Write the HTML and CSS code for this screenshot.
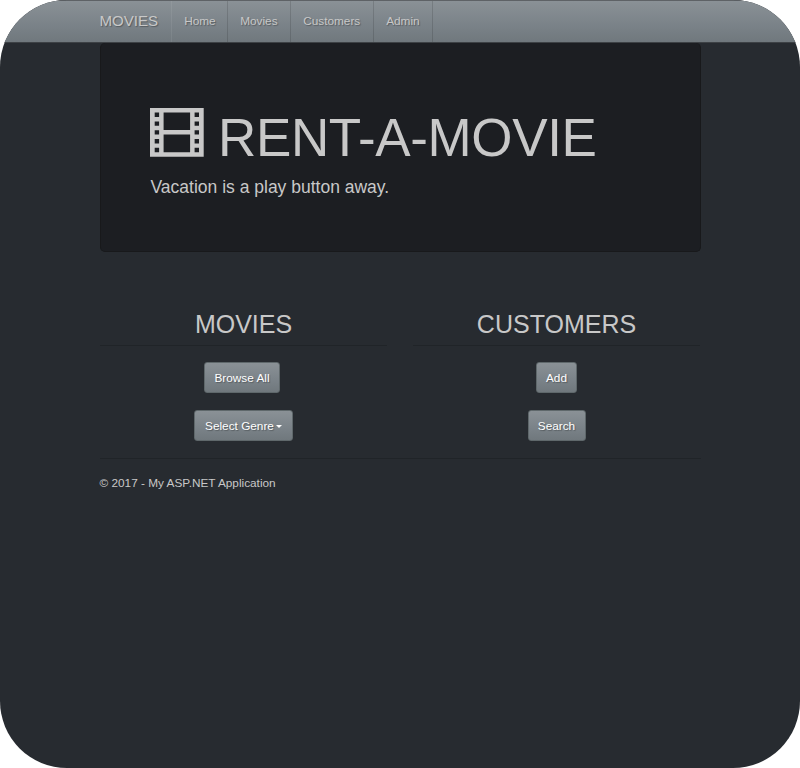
FILE: index.html
```html
<!DOCTYPE html>
<html lang="en">
<head>
<meta charset="utf-8">
<title>Rent-a-Movie</title>
<link rel="stylesheet" href="styles.css">
</head>
<body>
<div class="page">
  <nav class="navbar">
    <a class="brand">MOVIES</a>
    <ul class="nav">
      <li class="w-home">Home</li>
      <li class="w-movies">Movies</li>
      <li class="w-customers">Customers</li>
      <li class="w-admin">Admin</li>
    </ul>
  </nav>
  <main class="container">
    <header class="jumbotron">
      <h1><svg class="film" viewBox="0 0 54 49" aria-hidden="true"><path fill="currentColor" fill-rule="evenodd" d="M0 0H53.7V48.7H0ZM4.7 4.5V8.9H9.1V4.5ZM4.7 13.4V17.8H9.1V13.4ZM4.7 22.2V26.6H9.1V22.2ZM4.7 31V35.4H9.1V31ZM4.7 39.8V44.2H9.1V39.8ZM44.6 4.5V8.9H49V4.5ZM44.6 13.4V17.8H49V13.4ZM44.6 22.2V26.6H49V22.2ZM44.6 31V35.4H49V31ZM44.6 39.8V44.2H49V39.8ZM13.6 4.5V22.1H40.1V4.5ZM13.6 26.6V44.2H40.1V26.6Z"/></svg><span>RENT-A-MOVIE</span></h1>
      <p>Vacation is a play button away.</p>
    </header>
    <div class="row">
      <section class="col">
        <h2>MOVIES</h2>
        <button class="btn b-browse">Browse All</button>
        <button class="btn b-genre">Select Genre<i class="caret"></i></button>
      </section>
      <section class="col">
        <h2>CUSTOMERS</h2>
        <button class="btn b-add">Add</button>
        <button class="btn b-search">Search</button>
      </section>
    </div>
    <footer>© 2017 - My ASP.NET Application</footer>
  </main>
</div>
</body>
</html>
```
FILE: styles.css
```css
* { box-sizing: border-box; }
body {
  margin: 0;
  background: #fff;
  color: #c8c8c8;
  font: 11.8px/17px "Liberation Sans", Arial, sans-serif;
}
.page {
  height: 768px;
  overflow: hidden;
  border-radius: 67px;
  background: #272b30;
}
.navbar {
  display: flex;
  height: 43px;
  padding-left: 99.5px;
  border-top: 1px solid #5e6266;
  border-bottom: 1px solid #3d4145;
  background: linear-gradient(#8a9196, #7a8288 60%, #70787d);
  text-shadow: 1px 1px 1px rgba(0, 0, 0, .3);
}
.brand {
  width: 71px;
  font-size: 15.07px;
  line-height: 40px;
}
.nav {
  display: flex;
  margin: 0;
  padding: 0;
  list-style: none;
  border-left: 1px solid rgba(255, 255, 255, .07);
}
.nav li {
  padding-left: 12.7px;
  line-height: 41px;
  border-right: 1px solid rgba(0, 0, 0, .13);
}
.w-home { width: 56px; }
.w-movies { width: 63px; }
.w-customers { width: 83px; }
.w-admin { width: 59px; }
.container {
  width: 601px;
  margin-left: 100px;
}
.jumbotron {
  height: 209px;
  padding: 65px 50px 0;
  border: 1px solid #18191b;
  border-top: 0;
  border-radius: 5px;
  background: #1c1e22;
}
h1 {
  display: flex;
  margin: 0;
  height: 58px;
  font-size: 53px;
  letter-spacing: -.35px;
  font-weight: 400;
  line-height: 60px;
}
.film {
  width: 54px;
  height: 49px;
  margin-right: 14px;
  margin-left: -1px;
}
.jumbotron p {
  margin: 8.5px 0 0 -.5px;
  font-size: 17.5px;
  line-height: 24px;
}
.row {
  display: flex;
  gap: 26px;
  margin-top: 58px;
}
.col {
  width: 287px;
  display: flex;
  flex-direction: column;
  align-items: center;
}
h2 {
  width: 100%;
  height: 36px;
  margin: 0 0 16px;
  padding-top: 1px;
  border-bottom: 1px solid #202428;
  font-size: 25px;
  font-weight: 400;
  line-height: 27px;
  text-align: center;
}
.btn {
  height: 31px;
  margin: 0 0 17px;
  padding: 1px 0 0;
  border: 1px solid #5f686b;
  border-radius: 3px;
  background: linear-gradient(#8a9196, #7a8288 60%, #70787d);
  color: #fff;
  font: inherit;
  text-shadow: 1px 1px 1px rgba(0, 0, 0, .3);
}
.b-browse {
  width: 76px;
  margin-right: 3px;
}
.b-genre { width: 99px; }
.b-add { width: 41px; }
.b-search { width: 58px; }
.caret {
  display: inline-block;
  margin-left: 2px;
  vertical-align: middle;
  border: 3.5px solid transparent;
  border-top: 3px solid #fff;
  border-bottom: 0;
}
footer {
  border-top: 1px solid #202428;
  padding-top: 16px;
  margin-left: -.5px;
}
```
